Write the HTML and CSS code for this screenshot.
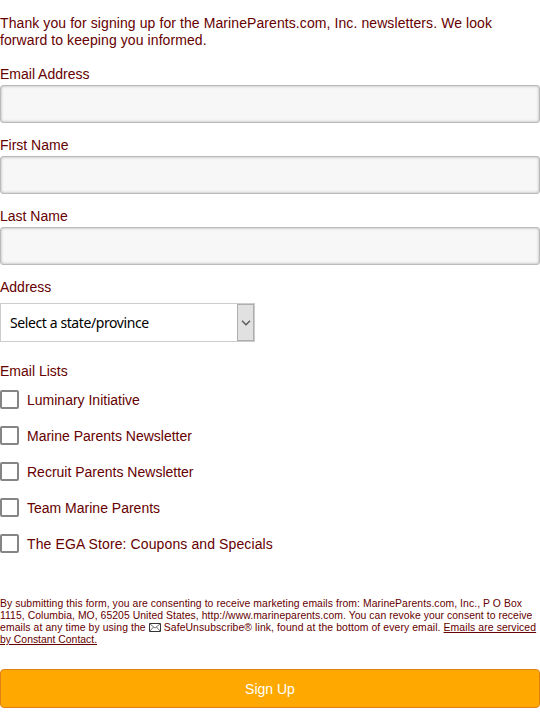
FILE: index.html
```html
<!DOCTYPE html>
<html lang="en">
<head>
<meta charset="utf-8">
<title>Newsletter Sign Up</title>
<link rel="stylesheet" href="styles.css">
</head>
<body>
<form class="signup">
  <p class="intro">Thank you for signing up for the MarineParents.com, Inc. newsletters. We look<br>forward to keeping you informed.</p>
  <div class="field"><label for="email">Email Address</label><input id="email" class="text-input" type="text"></div>
  <div class="field"><label for="first">First Name</label><input id="first" class="text-input" type="text"></div>
  <div class="field"><label for="last">Last Name</label><input id="last" class="text-input" type="text"></div>
  <div class="address">
    <span class="label">Address</span>
    <div class="select"><span class="select-text">Select a state/province</span><span class="select-arrow"><svg width="10" height="6" viewBox="0 0 10 6"><path d="M1 .8 5 4.8 9 .8" fill="none" stroke="#555" stroke-width="1.3"/></svg></span></div>
  </div>
  <div class="lists">
    <span class="label">Email Lists</span>
    <label class="option"><input type="checkbox"><span>Luminary Initiative</span></label>
    <label class="option"><input type="checkbox"><span>Marine Parents Newsletter</span></label>
    <label class="option"><input type="checkbox"><span>Recruit Parents Newsletter</span></label>
    <label class="option"><input type="checkbox"><span>Team Marine Parents</span></label>
    <label class="option"><input type="checkbox"><span class="loose">The EGA Store: Coupons and Specials</span></label>
  </div>
  <p class="consent"><span class="c1">By submitting this form, you are consenting to receive marketing emails from: MarineParents.com, Inc., P O Box</span><br><span class="c2">1115, Columbia, MO, 65205 United States, http://www.marineparents.com. You can revoke your consent to receive</span><br><span class="c3">emails at any time by using the <svg class="mail" width="12" height="9" viewBox="0 0 12 9"><path d="M.5.5h11v8H.5z" fill="#fff" stroke="#333"/><path d="M1 1l5 4 5-4M1 8l3.5-4M11 8 7.5 4" fill="none" stroke="#555" stroke-width=".8"/></svg> SafeUnsubscribe® link, found at the bottom of every email. <u>Emails are serviced</u></span><br><u class="c4">by Constant Contact.</u></p>
  <button class="submit" type="button">Sign Up</button>
</form>
</body>
</html>
```
FILE: styles.css
```css
* { box-sizing: border-box; }
body { margin: 0; background: #fff; color: #600; font: 14px/17px "Liberation Sans", Arial, sans-serif; }
.signup { padding-top: 15px; }
.intro { margin: 0 0 17px; letter-spacing: .088px; white-space: nowrap; }
.field { display: flex; flex-direction: column; height: 57px; margin-bottom: 14px; }
.field label { height: 19px; }
.text-input { width: 100%; height: 38px; margin: 0; padding: 8px; border: 1px solid #bbb; border-radius: 3px; background: #f7f7f7; box-shadow: inset 0 0 3px #aaa; }
.label { display: block; }
.select { display: flex; width: 255px; height: 39px; margin-top: 7px; border: 1px solid #ccc; background: #fff; color: #000; }
.select-text { flex: 1; padding-left: 9px; font: 14px/38px "Noto Sans", sans-serif; letter-spacing: -.4px; white-space: nowrap; }
.select-arrow { display: flex; align-items: center; justify-content: center; width: 17px; border: 1px solid #adadad; background: #e1e1e1; }
.lists { padding-top: 21px; }
.lists .label { margin-bottom: 10px; }
.option { display: flex; align-items: center; gap: 8px; height: 19px; margin-bottom: 17px; }
.option input { appearance: none; width: 19px; height: 19px; margin: 0; border: 2px solid #858585; border-radius: 2px; background: #fff; }
.option span { padding-top: 2px; line-height: 19px; }
.loose { letter-spacing: .11px; }
.consent { margin: 45px 0 23px; font-size: 10.4px; line-height: 12px; white-space: nowrap; }
.c1 { letter-spacing: .07px; }
.c2 { letter-spacing: .055px; }
.c3 { letter-spacing: .1px; }
.mail { vertical-align: -1px; }
.submit { display: block; width: 100%; height: 39px; padding: 2px 0 0; border: 1px solid #df8010; border-radius: 4px; background: #ffa900; color: #fff; font: 14px/35px "Liberation Sans", Arial, sans-serif; }
```
